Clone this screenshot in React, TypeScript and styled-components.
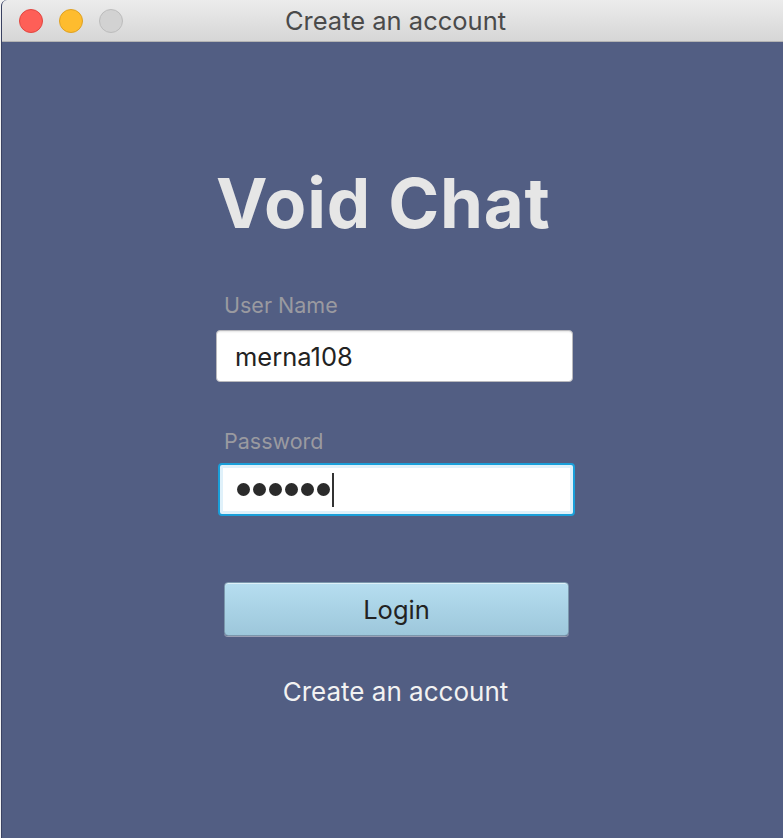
import styled, { createGlobalStyle } from 'styled-components';

const GlobalStyle = createGlobalStyle`
  html, body {
    margin: 0;
    padding: 0;
    background: #f2f2f2;
    overflow: hidden;
  }
  * {
    box-sizing: border-box;
  }
`;

const WindowFrame = styled.div`
  margin-left: 1px;
  height: 838px;
  display: flex;
  flex-direction: column;
  border-left: 1px solid #3a4262;
  border-top-left-radius: 6px;
  overflow: hidden;
  background: #525e83;
  font-family: Inter, 'Noto Sans', sans-serif;
`;

const TitleBar = styled.div`
  position: relative;
  height: 42px;
  flex-shrink: 0;
  display: flex;
  align-items: center;
  justify-content: center;
  background: linear-gradient(#ececec, #d6d6d6);
  border-bottom: 1px solid #b4b4b4;
`;

const Lights = styled.div`
  position: absolute;
  left: 17px;
  top: 9px;
  display: flex;
  gap: 16px;
`;

const Light = styled.span<{ color: string; edge: string }>`
  width: 24px;
  height: 24px;
  border-radius: 50%;
  background: ${(p) => p.color};
  border: 1px solid ${(p) => p.edge};
`;

const WindowTitle = styled.div`
  margin-left: 6px;
  font-size: 25.5px;
  color: #4a4a4a;
`;

const Content = styled.div`
  flex: 1;
  padding-left: 213px;
`;

const Form = styled.div`
  width: 362px;
  display: flex;
  flex-direction: column;
`;

const AppTitle = styled.h1`
  margin: 127px 0 0 1px;
  font-size: 69px;
  line-height: 68px;
  font-weight: 700;
  color: #e6e6e6;
  letter-spacing: 0.8px;
`;

const Label = styled.div<{ gap: number }>`
  margin: ${(p) => p.gap}px 0 0 9px;
  font-size: 21.5px;
  line-height: 24px;
  color: #9a9aa0;
`;

const Field = styled.div<{ focused?: boolean }>`
  margin-left: ${(p) => (p.focused ? 3 : 1)}px;
  margin-top: ${(p) => (p.focused ? 10 : 13)}px;
  width: 357px;
  height: ${(p) => (p.focused ? 53 : 52)}px;
  display: flex;
  align-items: center;
  gap: 3px;
  padding-left: ${(p) => (p.focused ? 17 : 18)}px;
  background: #fff;
  border-radius: 4px;
  border: ${(p) => (p.focused ? '2px solid #1a9fd9' : '1px solid #b9b9bd')};
  box-shadow: ${(p) =>
    p.focused ? 'inset 0 0 0 3px #e0f1fa' : 'inset 0 2px 2px -1px #e4e4e4'};
  font-size: 25.5px;
  color: #222;
`;

const Dot = styled.span`
  width: 13px;
  height: 13px;
  border-radius: 50%;
  background: #2b2b2b;
`;

const Caret = styled.span`
  width: 2px;
  height: 34px;
  margin-left: -1px;
  background: #333;
`;

const LoginButton = styled.button`
  margin: 66px 0 0 9px;
  width: 345px;
  height: 54px;
  border-radius: 4px;
  border: 1px solid #7b97ac;
  background: linear-gradient(#b6def0, #9dc7db);
  box-shadow: inset 0 1px 0 rgba(255, 255, 255, 0.55), 0 1px 0 #9a9fb4;
  font-family: Inter, 'Noto Sans', sans-serif;
  font-size: 25.5px;
  color: #222;
  padding: 0;
`;

const CreateLink = styled.div`
  margin: 41px 0 0 8px;
  width: 345px;
  text-align: center;
  font-size: 26px;
  line-height: 30px;
  color: #f2f2f2;
`;

export default function App() {
  return (
    <>
      <GlobalStyle />
      <WindowFrame>
        <TitleBar>
          <Lights>
            <Light color="#fe5f57" edge="#e14640" />
            <Light color="#febc2e" edge="#dea123" />
            <Light color="#d2d2d2" edge="#bcbcbc" />
          </Lights>
          <WindowTitle>Create an account</WindowTitle>
        </TitleBar>
        <Content>
          <Form>
            <AppTitle>Void Chat</AppTitle>
            <Label gap={56}>User Name</Label>
            <Field>merna108</Field>
            <Label gap={47}>Password</Label>
            <Field focused>
              {Array.from({ length: 6 }).map((_, i) => (
                <Dot key={i} />
              ))}
              <Caret />
            </Field>
            <LoginButton>Login</LoginButton>
            <CreateLink>Create an account</CreateLink>
          </Form>
        </Content>
      </WindowFrame>
    </>
  );
}
